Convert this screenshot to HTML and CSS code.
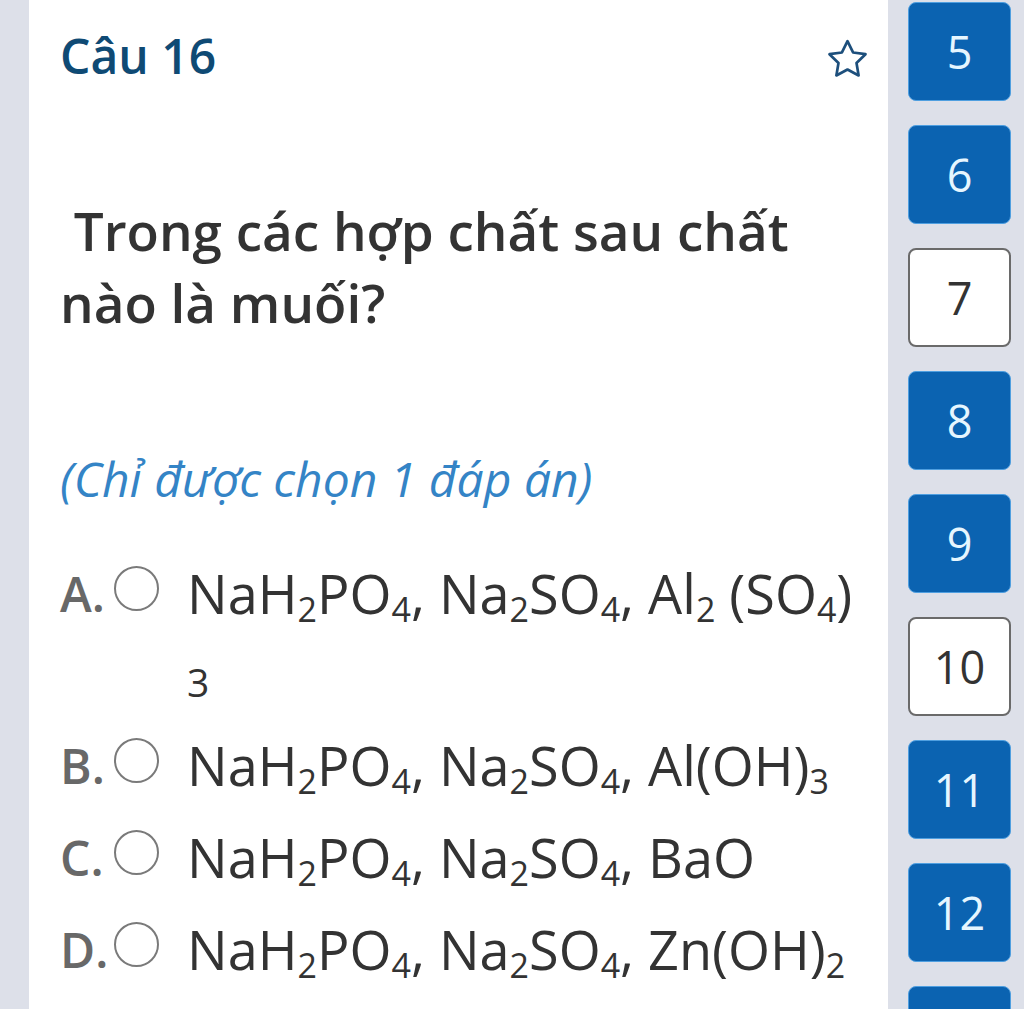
FILE: index.html
```html
<!DOCTYPE html>
<html lang="vi">
<head>
<meta charset="utf-8">
<title>Câu 16</title>
<link rel="stylesheet" href="styles.css">
</head>
<body>
<div class="page">
  <main class="card">
    <div class="head">
      <h2 class="title">Câu 16</h2>
      <svg class="star" viewBox="2 2 20 19.3" width="39" height="37" aria-hidden="true">
        <polygon points="12,2.6 14.9,8.5 21.4,9.4 16.7,14 17.8,20.5 12,17.4 6.2,20.5 7.3,14 2.6,9.4 9.1,8.5" />
      </svg>
    </div>
    <p class="question">&nbsp;Trong các hợp chất sau chất nào là muối?</p>
    <p class="hint">(Chỉ được chọn 1 đáp án)</p>
    <div class="opt">
      <span class="lbl">A.</span>
      <span class="radio"></span>
      <span class="txt">NaH<sub>2</sub>PO<sub>4</sub>, Na<sub>2</sub>SO<sub>4</sub>, Al<sub>2</sub> (SO<sub>4</sub>)<br><span class="wrap3">3</span></span>
    </div>
    <div class="opt opt-b">
      <span class="lbl">B.</span>
      <span class="radio"></span>
      <span class="txt">NaH<sub>2</sub>PO<sub>4</sub>, Na<sub>2</sub>SO<sub>4</sub>, Al(OH)<sub>3</sub></span>
    </div>
    <div class="opt">
      <span class="lbl">C.</span>
      <span class="radio"></span>
      <span class="txt">NaH<sub>2</sub>PO<sub>4</sub>, Na<sub>2</sub>SO<sub>4</sub>, BaO</span>
    </div>
    <div class="opt">
      <span class="lbl">D.</span>
      <span class="radio"></span>
      <span class="txt">NaH<sub>2</sub>PO<sub>4</sub>, Na<sub>2</sub>SO<sub>4</sub>, Zn(OH)<sub>2</sub></span>
    </div>
  </main>
  <aside class="side">
    <div class="num done">5</div>
    <div class="num done">6</div>
    <div class="num">7</div>
    <div class="num done">8</div>
    <div class="num done">9</div>
    <div class="num">10</div>
    <div class="num done">11</div>
    <div class="num done">12</div>
    <div class="num done"></div>
  </aside>
</div>
</body>
</html>
```
FILE: styles.css
```css
* { box-sizing: border-box; }
html, body {
  margin: 0;
  padding: 0;
  background: #dde0e9;
  font-family: "Open Sans", "Noto Sans", sans-serif;
}
.page {
  display: flex;
  height: 1009px;
  overflow: hidden;
  padding-left: 29px;
}
.card {
  width: 859px;
  flex: none;
  background: #ffffff;
  padding: 20px 21px 0 31px;
}
.head {
  display: flex;
  justify-content: space-between;
  align-items: center;
  height: 72px;
}
.title {
  margin: 0;
  font-size: 48px;
  font-weight: 600;
  line-height: 72px;
  color: #0f4a74;
}
.star {
  overflow: visible;
  margin-top: 5px;
}
.star polygon {
  fill: none;
  stroke: #1d4f7c;
  stroke-width: 1.4;
  stroke-linejoin: round;
}
.question {
  margin: 103px 0 0 0;
  font-size: 53px;
  font-weight: 600;
  line-height: 72px;
  color: #333333;
  width: 760px;
}
.hint {
  margin: 107px 0 0 0;
  font-size: 48px;
  font-style: italic;
  line-height: 66px;
  color: #3484c6;
}
.opt {
  display: flex;
  align-items: flex-start;
  margin-top: 9px;
  font-size: 54px;
  line-height: 83px;
  color: #333333;
}
.hint + .opt { margin-top: 40px; }
.opt-b { margin-top: 1px; }
.lbl {
  width: 54px;
  flex: none;
  font-size: 48px;
  font-weight: 600;
  color: #686868;
}
.radio {
  width: 45px;
  height: 45px;
  flex: none;
  margin-top: 14px;
  border: 2px solid #7a7a7a;
  border-radius: 50%;
}
.txt {
  margin-left: 28px;
  white-space: nowrap;
}
sub {
  font-size: 34px;
  line-height: 0;
  vertical-align: -8px;
}
.wrap3 {
  font-size: 39px;
}
.side {
  width: 136px;
  flex: none;
  display: flex;
  flex-direction: column;
  gap: 24px;
  padding: 2px 13px 0 20px;
}
.num {
  height: 99px;
  flex: none;
  display: flex;
  align-items: center;
  justify-content: center;
  border-radius: 8px;
  font-size: 45px;
  line-height: 1;
  background: #ffffff;
  border: 2px solid #6a6a6a;
  color: #333333;
}
.num.done {
  background: #0b63b1;
  border: 1px solid #4f9fe0;
  color: #e6f6ff;
}
```
